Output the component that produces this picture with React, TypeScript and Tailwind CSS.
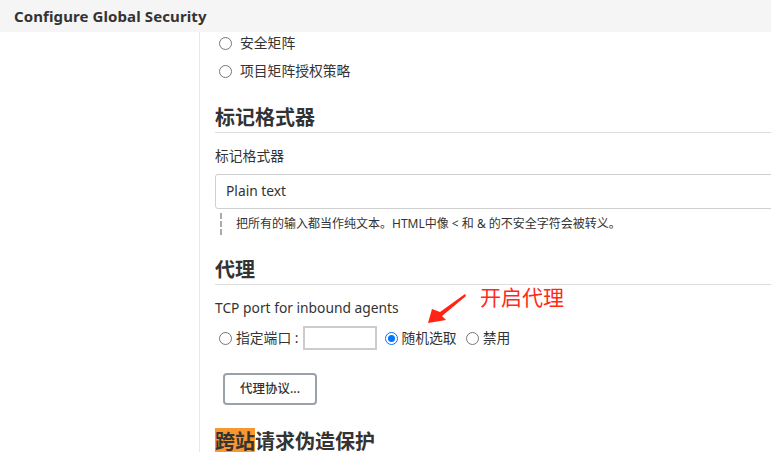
const cjk = { fontFamily: '"Noto Sans", "Noto Sans CJK SC", sans-serif' };

const Radio = ({ checked = false }: { checked?: boolean }) =>
    checked ? (
        <span className="inline-flex w-[13px] h-[13px] rounded-full border border-[#0075ff] items-center justify-center shrink-0">
            <span className="w-[7px] h-[7px] rounded-full bg-[#0075ff]" />
        </span>
    ) : (
        <span className="inline-block w-[13px] h-[13px] rounded-full border border-[#767676] bg-white shrink-0" />
    );

const Heading = ({ children, className = "" }: { children: React.ReactNode; className?: string }) => (
    <h2 className={`shrink-0 text-[20px] font-bold leading-[28px] text-[#333] border-b border-[#dedede] ${className}`}>
        {children}
    </h2>
);

export default function App() {
    return (
        <div className="w-[771px] h-[452px] overflow-hidden bg-white text-[#333]" style={cjk}>
            {/* 상단 바 */}
            <div className="h-[32px] bg-[#f5f5f5] flex items-center pl-[14px]">
                <h1 className="text-[15px] font-bold text-[#333] tracking-[0.1px]">Configure Global Security</h1>
            </div>

            <div className="flex">
                <div className="w-[200px] shrink-0 border-r border-[#e8e8e8]" />

                <div className="relative flex-1 pl-[15px] flex flex-col">
                    {/* 권한 전략 */}
                    <div className="flex flex-col gap-[6px] pl-[4px]">
                        <label className="h-[22px] flex items-center gap-[8px] text-[13.8px]">
                            <Radio />
                            安全矩阵
                        </label>
                        <label className="h-[22px] flex items-center gap-[8px] text-[13.8px]">
                            <Radio />
                            项目矩阵授权策略
                        </label>
                    </div>

                    <Heading className="mt-[22px]">标记格式器</Heading>
                    <div className="mt-[13px] text-[13.8px] leading-[20px]">标记格式器</div>
                    <div className="mt-[8px] h-[35px] border border-[#cfcfcf] rounded-l-[3px] flex items-center pl-[10px] text-[13.8px] mr-[-10px]">
                        Plain text
                    </div>
                    <div className="mt-[4px] ml-[5px] h-[22px] border-l-2 border-dashed border-[#aaa] pl-[14px] flex items-center text-[12px] whitespace-nowrap">
                        把所有的输入都当作纯文本。HTML中像 &lt; 和 &amp; 的不安全字符会被转义。
                    </div>

                    <Heading className="mt-[21px]">代理</Heading>
                    <div className="mt-[13px] text-[13.8px] leading-[20px]">TCP port for inbound agents</div>
                    <div className="mt-[8px] h-[24px] flex items-center text-[13.8px] pl-[4px]">
                        <Radio />
                        <span className="ml-[4px]">指定端口 :</span>
                        <input
                            className="ml-[5px] w-[74px] h-[24px] border-2 border-[#cccccc] outline-none"
                            readOnly
                        />
                        <span className="ml-[8px] flex">
                            <Radio checked />
                        </span>
                        <span className="ml-[3px]">随机选取</span>
                        <span className="ml-[9px] flex">
                            <Radio />
                        </span>
                        <span className="ml-[4px]">禁用</span>
                    </div>

                    <div className="mt-[23px] pl-[8px]">
                        <button className="w-[94px] h-[32px] border-2 border-[#9aa1a8] rounded-[4px] bg-white text-[12.5px] font-medium text-[#333]">
                            代理协议...
                        </button>
                    </div>

                    <h2 className="mt-[23px] text-[20px] font-bold leading-[28px] text-[#333]">
                        <span className="bg-[#f8962f]">跨站</span>请求伪造保护
                    </h2>

                    {/* 주석 */}
                    <div className="absolute left-[280px] top-[251px] text-[21px] leading-[28px] text-[#ff2a1a]">开启代理</div>
                    <svg className="absolute left-[220px] top-[257px]" width="50" height="40" viewBox="0 0 50 40">
                        <polygon points="45,5 20,23 12,20 8,34 26,31 22,27 46,7" fill="#ff2414" />
                    </svg>
                </div>
            </div>
        </div>
    );
}
